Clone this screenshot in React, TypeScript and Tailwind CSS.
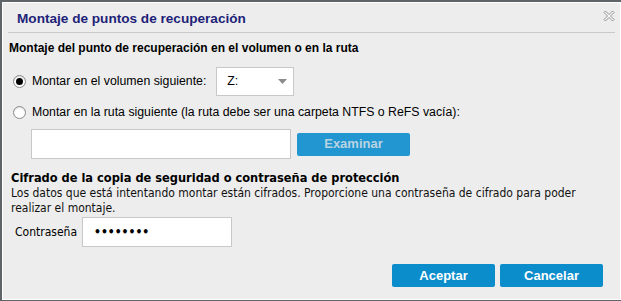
import React from "react";

function Radio({ checked }: { checked?: boolean }) {
  return (
    <span className="w-[13px] h-[13px] rounded-full border border-[#8a8a8a] bg-white flex items-center justify-center shrink-0 shadow-[inset_0_1px_1px_rgba(0,0,0,0.15)]">
      {checked && <span className="w-[7px] h-[7px] rounded-full bg-black" />}
    </span>
  );
}

export default function App() {
  return (
    <div className="w-[621px] h-[301px] bg-[#5f6468] pt-[2px] pl-[2px] pb-[1px] overflow-hidden">
      <div
        className="w-[619px] h-[298px] bg-[#ededed] border border-white flex flex-col relative"
        style={{ fontFamily: '"Liberation Sans", Arial, sans-serif' }}
      >
        <div className="h-[30px] mx-[5px] border-b border-[#c9c9c9] flex items-center pl-[9px] pt-[3px]">
          <span className="text-[13.6px] font-bold text-[#1d2378]">Montaje de puntos de recuperación</span>
        </div>
        <button className="absolute right-[5px] top-[7px] w-[12px] h-[12px]">
          <svg viewBox="0 0 12 12" width="12" height="12">
            <path d="M1 2.5 L2.5 1 L6 4.5 L9.5 1 L11 2.5 L7.5 6 L11 9.5 L9.5 11 L6 7.5 L2.5 11 L1 9.5 L4.5 6 Z" fill="#f4f4f4" stroke="#8a8a8a" strokeWidth="0.9" />
          </svg>
        </button>

        <div className="pl-[6px] pt-[6px] text-[12px] font-bold text-black">
          Montaje del punto de recuperación en el volumen o en la ruta
        </div>

        <div className="flex items-center pl-[10px] mt-[10px] h-[29px]">
          <Radio checked />
          <span className="ml-[6px] text-[12.3px] text-black">Montar en el volumen siguiente:</span>
          <div className="ml-[10px] w-[78px] h-[29px] bg-white border border-[#c8c8c8] flex items-center justify-between pl-[10px] pr-[6px]">
            <span className="text-[12.3px] text-black">Z:</span>
            <svg width="9" height="5" viewBox="0 0 9 5">
              <path d="M0 0 L9 0 L4.5 5 Z" fill="#8c8c8c" />
            </svg>
          </div>
        </div>

        <div className="flex items-center pl-[10px] mt-[4px] h-[25px]">
          <Radio />
          <span className="ml-[6px] text-[12.3px] text-black">
            Montar en la ruta siguiente (la ruta debe ser una carpeta NTFS o ReFS vacía):
          </span>
        </div>

        <div className="flex items-center pl-[28px] mt-[4px]">
          <div className="w-[260px] h-[30px] bg-white border border-[#c8c8c8]" />
          <button className="ml-[6px] w-[113px] h-[23px] bg-[#2196d0] rounded-[2px] text-[13px] font-bold text-[#b9d3e2]">
            Examinar
          </button>
        </div>

        <div
          style={{ fontFamily: '"DejaVu Sans Condensed", "DejaVu Sans", Verdana, sans-serif' }}
          className="pl-[8px] mt-[11px]"
        >
          <div className="text-[12.7px] font-bold text-black leading-[16px]">
            Cifrado de la copia de seguridad o contraseña de protección
          </div>
          <div className="text-[12px] text-[#111] leading-[15px] w-[600px]">
            Los datos que está intentando montar están cifrados. Proporcione una contraseña de cifrado para poder realizar el montaje.
          </div>
          <div className="flex items-center mt-[1px] pl-[4px]">
            <span className="text-[12px] text-black">Contraseña</span>
            <div className="ml-[5px] w-[150px] h-[30px] bg-white border border-[#c8c8c8] flex items-center pl-[11px]">
              <span className="text-[12px] font-bold text-black">••••••••</span>
            </div>
          </div>
        </div>

        <div className="flex justify-end gap-[5px] pr-[17px] mt-[17px]">
          <button className="w-[103px] h-[23px] bg-[#0b8ccb] rounded-[2px] text-[13px] font-bold text-white">
            Aceptar
          </button>
          <button className="w-[103px] h-[23px] bg-[#0b8ccb] rounded-[2px] text-[13px] font-bold text-white">
            Cancelar
          </button>
        </div>
      </div>
    </div>
  );
}
